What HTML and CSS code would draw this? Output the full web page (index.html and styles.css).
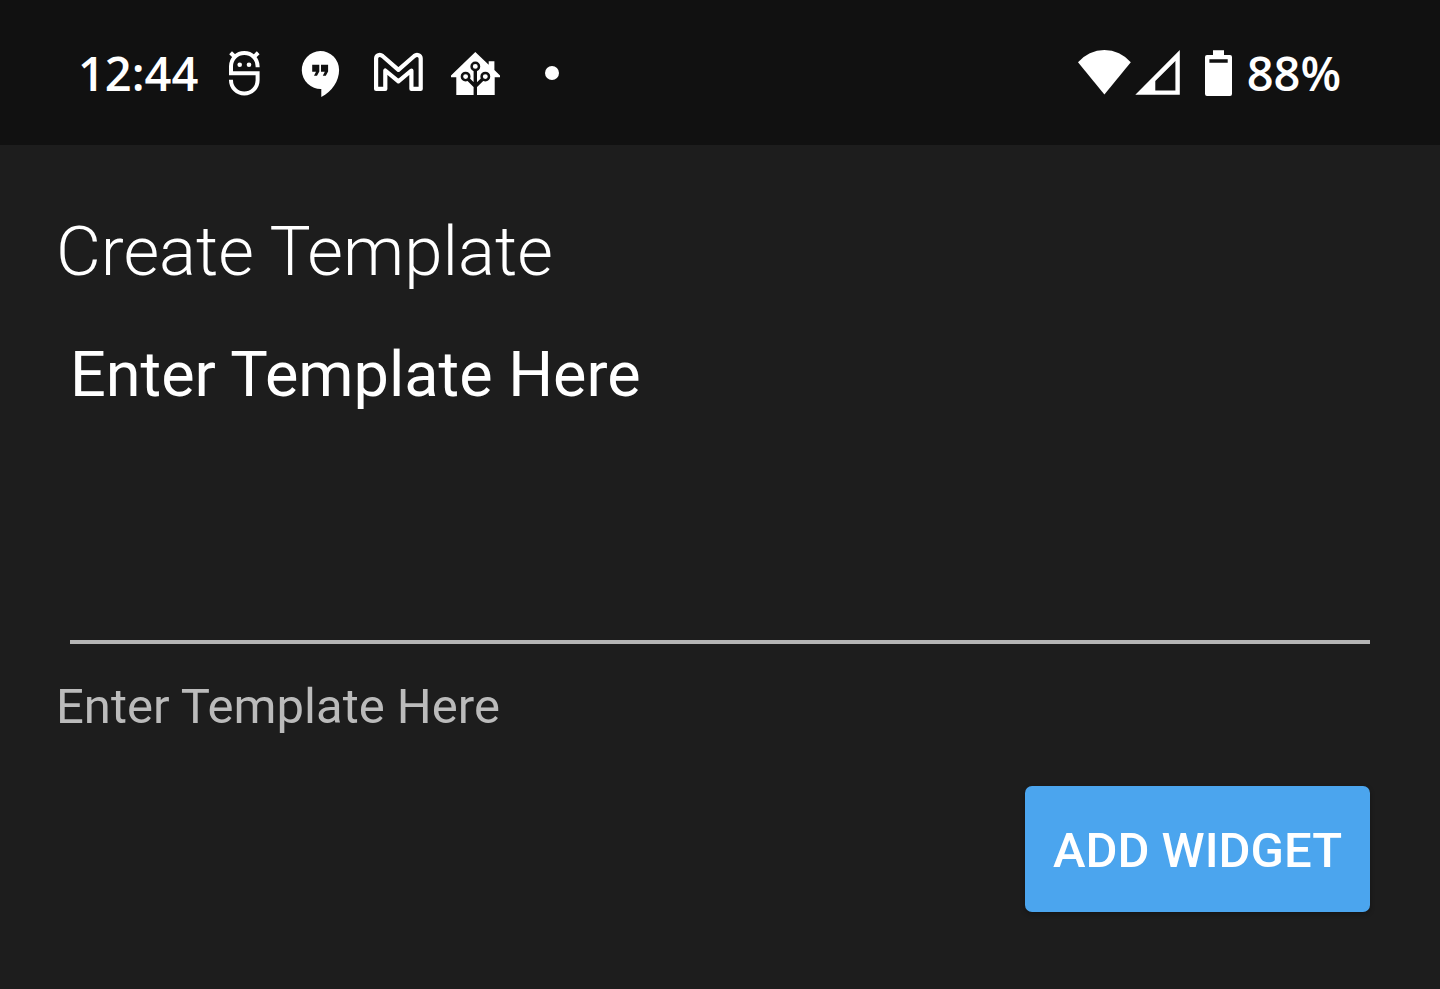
FILE: index.html
```
<!DOCTYPE html>
<html lang="en">
<head>
    <meta charset="UTF-8">
    <meta name="viewport" content="width=device-width, initial-scale=1.0">
    <title>Create Template</title>
    <link rel="stylesheet" href="styles.css">
</head>
<body>
    <header class="status-bar">
        <span class="clock">12:44</span>
        <div class="notifications">
            <svg viewBox="0 0 77 66" aria-hidden="true">
                <g fill="none" stroke="#fff" stroke-width="4">
                    <path d="M51.6 27.3V26.3A13.3 13.3 0 0 0 25 26.3V33.3H51.6V40.3A13.3 13.3 0 0 1 25 40.3V39.8"/>
                    <path d="M24.6 12.8L29.5 17.5M52.2 12.8L47.3 17.5"/>
                </g>
                <circle cx="33.7" cy="24.7" r="2.3" fill="#fff"/>
                <circle cx="43" cy="24.7" r="2.3" fill="#fff"/>
            </svg>
            <svg viewBox="0 0 77 66" aria-hidden="true">
                <path fill="#fff" d="M37.2 11A18.9 18.9 0 0 1 56.1 30C56.1 41 49 51.5 38.3 57V48.9A18.9 18.9 0 1 1 37.2 11Z"/>
                <path fill="#111" d="M29.2 24.7H36.3V31.5L34 35.8H31L33 31.8H29.2ZM38 24.7H45.1V31.5L42.8 35.8H39.8L41.8 31.8H38Z"/>
            </svg>
            <svg viewBox="0 0 77 66" aria-hidden="true">
                <path fill="none" stroke="#fff" stroke-width="4.2" stroke-linejoin="round" d="M16.1 48.9V18.5C16.1 15 20 14 22.5 16L38.4 29.9L54.3 16C56.8 14 60.7 15 60.7 18.5V48.9H51.4V30.5L38.4 41.3L25.3 30.5V48.9Z"/>
            </svg>
            <svg viewBox="0 0 77 66" aria-hidden="true">
                <path fill="#fff" d="M38.3 12L51.7 24.7V21.2H57.4V30L63 35.6V37.2H57.7V55H19.3V37.2H14V35.6Z"/>
                <g fill="none" stroke="#111">
                    <path stroke-width="3.4" d="M38.3 30V55M30.5 38.5L38.3 46.3L46.3 38.5"/>
                    <g fill="#fff" stroke-width="2.5">
                        <circle cx="38.3" cy="26.4" r="3.7"/>
                        <circle cx="28.6" cy="36.6" r="3.7"/>
                        <circle cx="48.3" cy="36.6" r="3.7"/>
                    </g>
                </g>
            </svg>
            <svg viewBox="0 0 77 66" aria-hidden="true">
                <circle cx="38" cy="33" r="7" fill="#fff"/>
            </svg>
        </div>
        <div class="system">
            <svg class="signals" viewBox="0 0 162 66" aria-hidden="true">
                <g fill="#fff">
                    <path d="M7 22.3A34.4 34.4 0 0 1 59.8 22.3L33.4 54.5Z"/>
                    <path fill-rule="evenodd" d="M108.8 10V54.8H64.3ZM104.4 21L84.3 41V50.4H104.4Z"/>
                    <path fill-rule="evenodd" d="M142 10.3H153V15H159Q161 15 161 17V54Q161 56 159 56H136Q134 56 134 54V17Q134 15 136 15H142ZM138.4 19.3V22.7H156.7V19.3Z"/>
                </g>
            </svg>
            <span class="battery-level">88%</span>
        </div>
    </header>
    <main class="content">
        <h1>Create Template</h1>
        <form class="template-form">
            <textarea id="template" class="template-input" spellcheck="false">Enter Template Here</textarea>
            <label for="template" class="template-preview">Enter Template Here</label>
            <button type="button" class="add-widget">ADD WIDGET</button>
        </form>
    </main>
</body>
</html>
```
FILE: styles.css
```
* {
    box-sizing: border-box;
}

body {
    margin: 0;
    min-height: 100vh;
    background: #1d1d1d;
    color: #fff;
    font-family: Roboto, "Liberation Sans", sans-serif;
}

.status-bar {
    display: flex;
    align-items: center;
    padding: 40px 99px 39px 78px;
    background: #111;
    font-family: "Open Sans", "Noto Sans", sans-serif;
    font-size: 47px;
    font-weight: 600;
    line-height: 66px;
}

.clock {
    width: 128px;
}

.notifications {
    display: flex;
}

.notifications svg {
    display: block;
    width: 77px;
    height: 66px;
}

.system {
    display: flex;
    align-items: center;
    gap: 14px;
    margin-left: auto;
}

.signals {
    display: block;
    width: 162px;
    height: 66px;
}

.content {
    padding: 65px 56px;
}

h1 {
    margin: 0;
    font-size: 69px;
    font-weight: 300;
    line-height: 83px;
}

.template-form {
    display: flex;
    flex-direction: column;
    padding-top: 45px;
}

.template-input {
    height: 306px;
    margin: 0 14px;
    padding: 0;
    border: none;
    border-bottom: 4px solid #b5b5b5;
    outline: none;
    resize: none;
    background: transparent;
    color: #fff;
    font-family: inherit;
    font-size: 63px;
    line-height: 74px;
}

.template-preview {
    margin-top: 34px;
    color: #bbb;
    font-size: 49px;
    line-height: 57px;
}

.add-widget {
    align-self: flex-end;
    margin: 51px 14px 0;
    padding: 36px 28px 32px;
    border: none;
    border-radius: 7px;
    background: #4ba5ee;
    box-shadow: 0 2px 5px rgba(0, 0, 0, 0.3);
    color: #fff;
    font-family: inherit;
    font-size: 49px;
    font-weight: 500;
    line-height: 58px;
    cursor: pointer;
}
```
